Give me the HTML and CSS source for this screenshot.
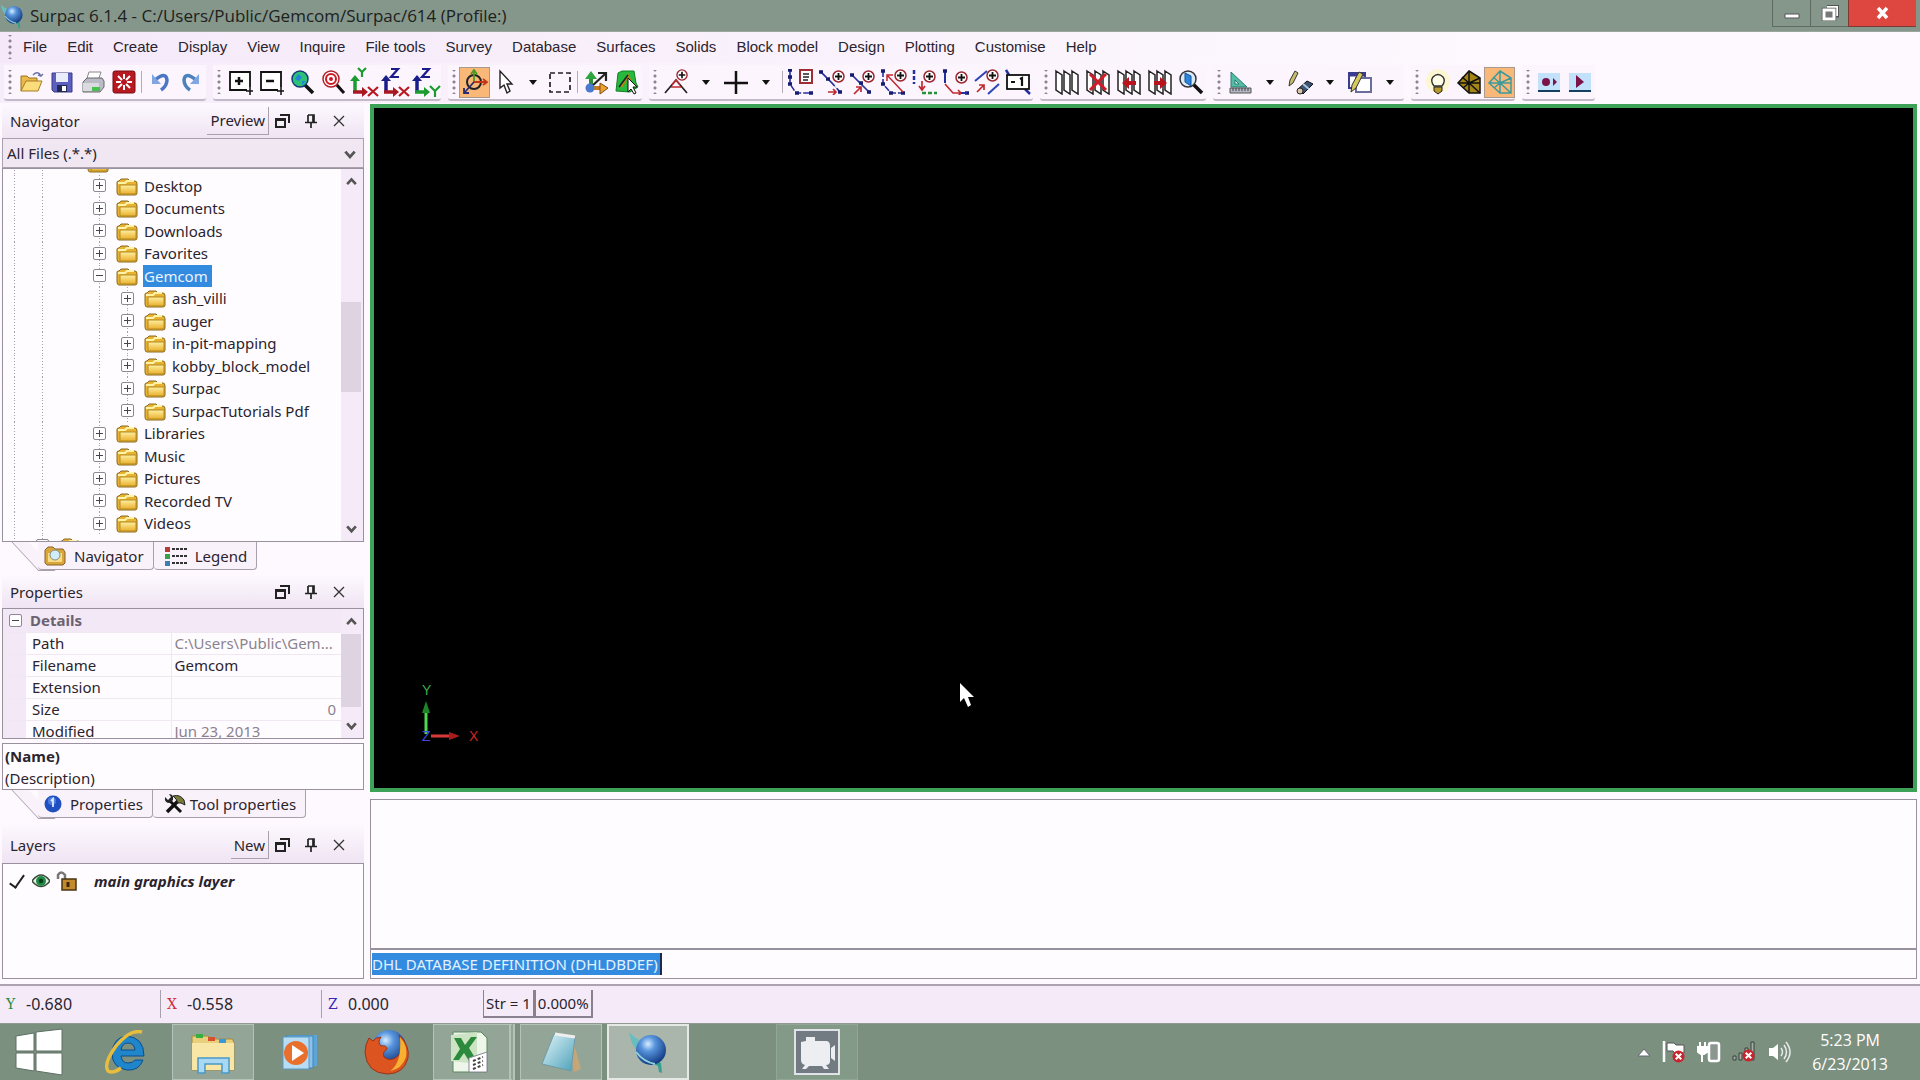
FILE: index.html
```html
<!DOCTYPE html>
<html lang="en">
<head>
    <title>Surpac 6.1.4</title>
    <meta charset="UTF-8">
    <link rel="stylesheet" href="styles.css">
</head>
<body>
    <!-- Shared icons -->
    <svg class="defs" aria-hidden="true">
        <defs>
            <radialGradient id="ball" cx="40%" cy="30%" r="70%"><stop offset="0" stop-color="#d5ecff"/><stop offset=".35" stop-color="#5794dc"/><stop offset="1" stop-color="#123a82"/></radialGradient>
            <linearGradient id="gold" x1="0" y1="0" x2="0" y2="1"><stop offset="0" stop-color="#fff0a0"/><stop offset="1" stop-color="#e9b02c"/></linearGradient>
            <linearGradient id="note" x1="0" y1="0" x2="1" y2="1"><stop offset="0" stop-color="#e4f6fa"/><stop offset="1" stop-color="#4aa0b8"/></linearGradient>
            <symbol id="folder" viewBox="0 0 22 18">
                <path d="M1 4 Q1 3 3 3 L5 1 H12 L14 3 H19 Q21 3 21 6 V15 Q21 17 19 17 H3 Q1 17 1 14 Z" fill="#e8b230" stroke="#8a6a20"/>
                <path d="M2 5 H9 L11 3 H18" stroke="#fff3a8" stroke-width="2" fill="none"/>
                <path d="M4 7 H20 V15 Q20 16 18 16 H4 Z" fill="url(#gold)" stroke="#b58a26"/>
            </symbol>
            <symbol id="float" viewBox="0 0 16 16"><path d="M1 6 H10 V14 H1 Z M1 7 H10 M5 2 H14 V10" fill="none" stroke="#222" stroke-width="2"/></symbol>
            <symbol id="pin" viewBox="0 0 16 16"><path d="M5 2 H11 V9 M5 2 V9 M10 2 V9 M2 9.500 H14 M8 10 V15" fill="none" stroke="#222" stroke-width="1.700"/></symbol>
            <symbol id="close" viewBox="0 0 16 16"><path d="M3 3 L13 13 M13 3 L3 13" stroke="#333" stroke-width="1.300"/></symbol>
            <symbol id="up" viewBox="0 0 12 12"><path d="M2 8.500 L6 4 L10 8.500" fill="none" stroke="#555" stroke-width="2.400"/></symbol>
            <symbol id="down" viewBox="0 0 12 12"><path d="M2 4 L6 8.500 L10 4" fill="none" stroke="#555" stroke-width="2.400"/></symbol>
            <symbol id="tri" viewBox="0 0 10 10"><path d="M1 3 H9 L5 8 Z" fill="#111"/></symbol>
            <symbol id="plus" viewBox="0 0 13 13"><circle cx="6.500" cy="6.500" r="5.500" fill="#fff" stroke="#9c2730" stroke-width="1.500"/><path d="M6.500 3 V10 M3 6.500 H10" stroke="#111" stroke-width="1.800"/></symbol>
            <symbol id="badx" viewBox="0 0 14 14"><circle cx="7" cy="7" r="6.500" fill="#c9252f"/><path d="M4 4 L10 10 M10 4 L4 10" stroke="#fff" stroke-width="2.200"/></symbol>
            <symbol id="globe" viewBox="0 0 40 44"><path d="M3 4 Q5 26 30 36 L31 42 L34 43 L33 33 Q12 24 3 4 Z" fill="#35a08e"/><path d="M1 2 Q4 20 16 26 Q6 12 12 10 Q5 7 1 2" fill="#66bec0"/><circle cx="23" cy="20" r="15" fill="url(#ball)"/><path d="M8 22 Q16 32 27 34" stroke="#8fd2dd" stroke-width="2" fill="none"/></symbol>
            <symbol id="panes" viewBox="0 0 26 26"><path d="M2 2 L8 6 V25 L2 21 Z M10 2 L16 6 V25 L10 21 Z M18 2 L24 6 V25 L18 21 Z" fill="#fff" stroke="#222" stroke-width="1.500"/></symbol>
        </defs>
    </svg>

    <!-- Title bar -->
    <header class="titlebar">
        <svg class="title-icon" viewBox="0 0 40 44"><use href="#globe"/></svg>
        <h1>Surpac 6.1.4 - C:/Users/Public/Gemcom/Surpac/614 (Profile:)</h1>
        <div class="window-buttons">
            <button aria-label="Minimise"><svg width="16" height="16" viewBox="0 0 16 16"><path d="M1 9 H15 V13 H1 Z" fill="#fff" stroke="#555"/></svg></button>
            <button aria-label="Restore"><svg width="18" height="16" viewBox="0 0 18 16"><path d="M6 1 H17 V11 H14" fill="none" stroke="#555" stroke-width="3"/><path d="M6 2 H16 V11" fill="none" stroke="#fff" stroke-width="2"/><path d="M3 5 H13 V14 H3 Z" fill="none" stroke="#555" stroke-width="4.500"/><path d="M3 5 H13 V14 H3 Z" fill="#777" stroke="#fff" stroke-width="3"/></svg></button>
            <button class="close" aria-label="Close"><svg width="15" height="14" viewBox="0 0 15 14"><path d="M3 2 L12 12 M12 2 L3 12" stroke="#fff" stroke-width="3.500"/></svg></button>
        </div>
    </header>

    <!-- Menus -->
    <nav class="menubar">
        <span class="grip"></span>
        <button>File</button><button>Edit</button><button>Create</button><button>Display</button><button>View</button><button>Inquire</button><button>File tools</button><button>Survey</button><button>Database</button><button>Surfaces</button><button>Solids</button><button>Block model</button><button>Design</button><button>Plotting</button><button>Customise</button><button>Help</button>
    </nav>

    <!-- Toolbars -->
    <div class="toolbar">
        <div class="group">
            <span class="grip"></span>
            <button aria-label="Open"><svg viewBox="0 0 26 26"><path d="M3 22 V7 H9 L11 9 H19 V12" fill="#eab94a" stroke="#9a7420"/><path d="M3 22 L8 12 H24 L20 22 Z" fill="#fbdc7a" stroke="#a67c22"/><path d="M15 6 Q20 1 23 7 L25 5 M23 7 L20 6" fill="none" stroke="#6b74a8" stroke-width="1.500"/></svg></button>
            <button aria-label="Save"><svg viewBox="0 0 26 26"><path d="M3 4 H23 V23 H5 L3 21 Z" fill="#5a5fc0" stroke="#3a3d86"/><path d="M7 4 H19 V13 H7 Z" fill="#e8ecfb"/><path d="M8 16 H18 V23 H8 Z" fill="#222a50"/><path d="M13 17 H17 V22 H13 Z" fill="#fff"/></svg></button>
            <button aria-label="Print"><svg viewBox="0 0 26 26"><path d="M9 3 H21 L18 12 H6 Z" fill="#fff" stroke="#888"/><path d="M3 13 L7 9 H22 L24 12 V18 L20 23 H3 Z" fill="#b9bcc4" stroke="#666"/><path d="M3 14 H19 V22 H3 Z" fill="#d9dbe0"/><path d="M12 18 H20 V22 H12 Z" fill="#46c04f"/></svg></button>
            <button aria-label="Reset graphics"><svg viewBox="0 0 26 26"><rect x="2" y="2" width="22" height="22" rx="2" fill="#b81820" stroke="#7b0c12"/><path d="M13 5 V10 M13 16 V21 M5 13 H10 M16 13 H21 M7 7 L11 11 M15 15 L19 19 M19 7 L15 11 M11 15 L7 19" stroke="#fff" stroke-width="2"/></svg></button>
            <span class="sep"></span>
            <button aria-label="Undo"><svg viewBox="0 0 26 26"><path d="M8 11 Q19 2 20 11 Q20 17 14 21" fill="none" stroke="#4a76c4" stroke-width="3.500"/><path d="M5 5 V15 H14 Z" fill="#7fa6e2"/></svg></button>
            <button aria-label="Redo"><svg viewBox="0 0 26 26"><path d="M18 11 Q7 2 6 11 Q6 17 12 21" fill="none" stroke="#4a82bc" stroke-width="3.500"/><path d="M21 5 V15 H12 Z" fill="#7fa6e2"/></svg></button>
        </div>
        <div class="group">
            <span class="grip"></span>
            <button aria-label="Zoom in"><svg viewBox="0 0 26 26"><path d="M20 21 H3 V3 H23 V18" fill="#fff" stroke="#111" stroke-width="1.800"/><path d="M12 8 V16 M8 12 H16" stroke="#111" stroke-width="2.500"/><path d="M23 18 V26 M19 22 H26" stroke="#111" stroke-width="1.500"/></svg></button>
            <button aria-label="Zoom out"><svg viewBox="0 0 26 26"><path d="M20 21 H3 V3 H23 V18" fill="#fff" stroke="#111" stroke-width="1.800"/><path d="M8 12 H16" stroke="#111" stroke-width="2.500"/><path d="M23 18 V26 M19 22 H26" stroke="#111" stroke-width="1.500"/></svg></button>
            <button aria-label="Zoom all"><svg viewBox="0 0 26 26"><path d="M15 15 L24 24" stroke="#111" stroke-width="3.500"/><circle cx="11" cy="10" r="8" fill="#2cc276" stroke="#163a7a" stroke-width="1.500"/><path d="M9 5 L13 8 L10 12 L6 10 Z M13 12 H17 L13 16 Z" fill="#2484dc"/></svg></button>
            <button aria-label="Zoom to data"><svg viewBox="0 0 26 26"><path d="M16 15 L24 24" stroke="#111" stroke-width="3"/><circle cx="11" cy="10" r="8" fill="#fff" stroke="#b02028" stroke-width="1.500"/><circle cx="11" cy="10" r="5" fill="#fff" stroke="#d01824" stroke-width="2"/><circle cx="11" cy="10" r="2" fill="#d01824"/></svg></button>
            <button class="axes" aria-label="XY view"><svg viewBox="0 0 30 30"><path d="M6 25 V13" stroke="#1c9c30" stroke-width="3.500"/><path d="M1 14 L6 8 L11 14 Z" fill="#1c9c30"/><path d="M4 25 H15" stroke="#a81820" stroke-width="3.500"/><path d="M13 20 L19 25 L13 30 Z" fill="#a81820"/><path d="M9 1 L13 5 L17 1 M13 5 V10" stroke="#1c9c30" stroke-width="2.200" fill="none"/><path d="M19 20 L29 29 M29 20 L19 29" stroke="#b81820" stroke-width="2.200"/></svg></button>
            <button class="axes" aria-label="XZ view"><svg viewBox="0 0 30 30"><path d="M6 25 V13" stroke="#1a1c8c" stroke-width="3.500"/><path d="M1 14 L6 8 L11 14 Z" fill="#1a1c8c"/><path d="M4 25 H15" stroke="#a81820" stroke-width="3.500"/><path d="M13 20 L19 25 L13 30 Z" fill="#a81820"/><path d="M11 2 H18 L11 10 H19" stroke="#1a1c8c" stroke-width="2.200" fill="none"/><path d="M19 20 L29 29 M29 20 L19 29" stroke="#b81820" stroke-width="2.200"/></svg></button>
            <button class="axes" aria-label="YZ view"><svg viewBox="0 0 30 30"><path d="M6 25 V13" stroke="#1a1c8c" stroke-width="3.500"/><path d="M1 14 L6 8 L11 14 Z" fill="#1a1c8c"/><path d="M4 25 H15" stroke="#1c9c30" stroke-width="3.500"/><path d="M13 20 L19 25 L13 30 Z" fill="#1c9c30"/><path d="M11 2 H18 L11 10 H19" stroke="#1a1c8c" stroke-width="2.200" fill="none"/><path d="M19 19 L24 24 L29 19 M24 24 V30" stroke="#1c9c30" stroke-width="2.200" fill="none"/></svg></button>
        </div>
        <div class="group">
            <span class="grip"></span>
            <button class="on" aria-label="Orbit"><svg viewBox="0 0 26 26"><circle cx="12" cy="13" r="7" fill="none" stroke="#222" stroke-width="2"/><path d="M12 14 V2 M9 5 L12 1 L15 5" stroke="#4a9a20" stroke-width="1.800" fill="none"/><path d="M12 13 H24 M21 10 L25 13 L21 16" stroke="#c03818" stroke-width="1.800" fill="none"/><path d="M12 13 L2 24 M2 19 V24 H7" stroke="#2c2c70" stroke-width="1.800" fill="none"/></svg></button>
            <button aria-label="Select"><svg viewBox="0 0 26 26"><path d="M7 2 V19 L11 16 L14 24 L17 22 L14 15 H19 Z" fill="#fff" stroke="#222" stroke-width="1.400"/></svg></button>
            <button class="drop narrow" aria-label="Select options"><svg viewBox="0 0 10 10"><use href="#tri"/></svg></button>
            <button aria-label="Box select"><svg viewBox="0 0 26 26"><rect x="3" y="4" width="20" height="19" fill="none" stroke="#222" stroke-width="1.700" stroke-dasharray="5 3"/></svg></button>
            <span class="sep"></span>
            <button aria-label="Move data"><svg viewBox="0 0 26 26"><path d="M8 16 V7" stroke="#2c8c38" stroke-width="4"/><path d="M2 10 L8 2 L14 10 Z" fill="#2fa53e"/><path d="M8 18 L22 5 M15 4 H23 V12" stroke="#222" stroke-width="2.200" fill="none"/><path d="M10 19 H18" stroke="#c87a1c" stroke-width="4"/><path d="M17 14 L25 19 L17 25 Z" fill="#eea030" stroke="#7a4c10"/><circle cx="7" cy="19" r="4.500" fill="#4a7ad0"/></svg></button>
            <button aria-label="Edit surface"><svg viewBox="0 0 26 26"><path d="M4 4 L8 2 H20 L22 14 L24 18 L16 23 L2 22 Z" fill="#27b83c" stroke="#128025"/><path d="M7 18 L14 7 L19 18" stroke="#b8860b" stroke-width="2.500" fill="none"/><path d="M5 18 L14 6" stroke="#123" stroke-width="1.500"/><path d="M14 9 V23 L17 20 L20 25 L22 24 L19 18 H23 Z" fill="#fff" stroke="#111"/></svg></button>
        </div>
        <div class="group">
            <span class="grip"></span>
            <button aria-label="New segment"><svg viewBox="0 0 26 26"><path d="M2 24 L13 11 L24 24" fill="none" stroke="#222" stroke-width="1.700"/><path d="M8 18 H18 M9 16 L13 11 L17 16" fill="none" stroke="#c02830" stroke-width="1.500"/><use href="#plus" x="13" y="0" width="12" height="12"/></svg></button>
            <button class="drop" aria-label="Segment options"><svg viewBox="0 0 10 10"><use href="#tri"/></svg></button>
            <button aria-label="New point"><svg viewBox="0 0 26 26"><path d="M13 2 V25 M1 14 H25" stroke="#111" stroke-width="2.500"/></svg></button>
            <button class="drop" aria-label="Point options"><svg viewBox="0 0 10 10"><use href="#tri"/></svg></button>
            <span class="sep"></span>
            <button aria-label="Segment properties"><svg viewBox="0 0 26 26"><path d="M2 1 V15 L8 24 H25" fill="none" stroke="#2430a0" stroke-width="1.600" stroke-dasharray="6 2"/><path d="M0 1 H4 M0 8 H4 M0 15 H4 M7 24 H11 M21 24 H25" stroke="#161c70" stroke-width="3.500"/><rect x="12" y="1" width="12" height="13" fill="#fff" stroke="#a02c34" stroke-width="2"/><path d="M15 5 H21 M15 8 H21 M15 11 H20" stroke="#222" stroke-width="1.300"/></svg></button>
            <button aria-label="Insert point"><svg viewBox="0 0 26 26"><path d="M1 2 L13 14 L21 23" stroke="#2430a0" stroke-width="1.700" stroke-dasharray="9 3"/><path d="M0 3 H4 M7 10 H11 M19 23 H23" stroke="#161c70" stroke-width="3.500"/><path d="M9 23 H17 M14 20 L17 23 L14 26" stroke="#c02830" stroke-width="1.700" fill="none"/><use href="#plus" x="13" y="1" width="13" height="13"/></svg></button>
            <button aria-label="Move point"><svg viewBox="0 0 26 26"><path d="M2 6 L20 24" stroke="#2430a0" stroke-width="1.700"/><path d="M0 6 H4 M9 14 H13 M17 23 H21" stroke="#161c70" stroke-width="3.500"/><path d="M4 25 L11 18 M6 18 H11 V23" stroke="#c02830" stroke-width="1.700" fill="none"/><use href="#plus" x="12" y="1" width="13" height="13"/></svg></button>
            <button aria-label="Close segment"><svg viewBox="0 0 26 26"><path d="M2 2 V15 L10 24 H23" fill="none" stroke="#2430a0" stroke-width="1.600" stroke-dasharray="6 2"/><path d="M0 2 H4 M0 15 H4 M8 24 H12 M20 24 H24" stroke="#161c70" stroke-width="3.500"/><path d="M22 23 L6 6 M6 12 V6 H12" stroke="#c02830" stroke-width="1.500" fill="none"/><use href="#plus" x="13" y="0" width="13" height="13"/></svg></button>
            <button aria-label="Copy segment"><svg viewBox="0 0 26 26"><path d="M2 1 V15" stroke="#2430a0" stroke-width="2.500" stroke-dasharray="4 2"/><path d="M10 12 V20 M7 17 L10 21 L13 17" stroke="#c02830" stroke-width="1.700" fill="none"/><path d="M10 24 H25" stroke="#26933a" stroke-width="2.500" stroke-dasharray="4 2"/><use href="#plus" x="11" y="1" width="13" height="13"/></svg></button>
            <button aria-label="Extend segment"><svg viewBox="0 0 26 26"><path d="M2 1 V14" stroke="#2430a0" stroke-width="2"/><path d="M0 2 H4 M22 24 H26" stroke="#161c70" stroke-width="3.500"/><path d="M2 15 L10 24 H18 M15 21 L18 24 L15 27" stroke="#c02830" stroke-width="1.600" fill="none"/><path d="M18 24 H24" stroke="#2430a0" stroke-width="2"/><use href="#plus" x="12" y="2" width="13" height="13"/></svg></button>
            <button aria-label="Break segment"><svg viewBox="0 0 26 26"><path d="M1 12 L13 2 M14 25 L25 15" stroke="#2c46b8" stroke-width="2"/><path d="M3 23 L10 16 M5 16 H10 V21" stroke="#c02830" stroke-width="1.700" fill="none"/><use href="#plus" x="12" y="0" width="13" height="13"/></svg></button>
            <button aria-label="Renumber"><svg viewBox="0 0 26 26"><path d="M1 1 L4 6 M20 20 L25 25" stroke="#2430a0" stroke-width="2.500"/><rect x="2" y="6" width="22" height="14" fill="#fff" stroke="#111" stroke-width="1.800"/><path d="M6 13 H10 M15 10 L17 9 V17" stroke="#111" stroke-width="2.200" fill="none"/></svg></button>
        </div>
        <div class="group">
            <span class="grip"></span>
            <button aria-label="Sections"><svg viewBox="0 0 26 26"><use href="#panes"/></svg></button>
            <button aria-label="Clear sections"><svg viewBox="0 0 26 26"><use href="#panes"/><path d="M5 5 L21 21 M21 5 L5 21" stroke="#d01c28" stroke-width="3"/></svg></button>
            <button aria-label="Previous section"><svg viewBox="0 0 26 26"><use href="#panes"/><path d="M6 14 L13 8 V12 H20 V16 H13 V20 Z" fill="#b8141e"/></svg></button>
            <button aria-label="Next section"><svg viewBox="0 0 26 26"><use href="#panes"/><path d="M20 14 L13 8 V12 H7 V16 H13 V20 Z" fill="#b8141e"/></svg></button>
            <button aria-label="View section"><svg viewBox="0 0 26 26"><path d="M15 15 L24 24" stroke="#111" stroke-width="3.500"/><circle cx="10" cy="10" r="8" fill="#dceaf8" stroke="#333" stroke-width="1.500"/><path d="M7 4 L13 7 V17 L7 13 Z" fill="#2a86dc" stroke="#174f94"/></svg></button>
        </div>
        <div class="group">
            <span class="grip"></span>
            <button aria-label="Measure"><svg viewBox="0 0 26 26"><path d="M4 3 V18 H20 Z M8 11 V15 H12 Z" fill="#54bca4" stroke="#2c7a70" fill-rule="evenodd"/><path d="M3 19 H24 V24 H3 Z" fill="#b4b8c4" stroke="#555"/><path d="M6 19 V22 M9 19 V22 M12 19 V22 M15 19 V22 M18 19 V22 M21 19 V22" stroke="#444"/></svg></button>
            <button class="drop" aria-label="Measure options"><svg viewBox="0 0 10 10"><use href="#tri"/></svg></button>
            <button aria-label="Edit"><svg viewBox="0 0 26 26"><path d="M8 2 L11 4 L6 14 L2 17 L3 11 Z" fill="#c9bc6a" stroke="#333"/><path d="M11 20 L20 12 L26 15 L16 25 Z" fill="#3b5474" stroke="#111"/><path d="M16 15 L22 20" stroke="#b0c4dc" stroke-width="2"/><ellipse cx="13" cy="22" rx="3" ry="3" fill="#d8c4a8" stroke="#222"/></svg></button>
            <button class="drop" aria-label="Edit options"><svg viewBox="0 0 10 10"><use href="#tri"/></svg></button>
            <button aria-label="Layout"><svg viewBox="0 0 26 26"><rect x="2" y="4" width="16" height="15" fill="#fff" stroke="#3a3c90" stroke-width="2"/><path d="M2 6 H18" stroke="#3a3c90" stroke-width="3"/><rect x="9" y="9" width="15" height="14" fill="#fff" stroke="#6a6c9a" stroke-width="2"/><path d="M12 3 L16 5 L9 19 L4 23 L5 16 Z" fill="#d8c860" stroke="#333"/></svg></button>
            <button class="drop" aria-label="Layout options"><svg viewBox="0 0 10 10"><use href="#tri"/></svg></button>
        </div>
        <div class="group">
            <span class="grip"></span>
            <button aria-label="Light"><svg viewBox="0 0 26 26"><circle cx="13" cy="12" r="12" fill="#fdf6b8" opacity=".6"/><path d="M9 17 Q5 12 8 8 Q13 3 18 8 Q21 12 17 17 Z" fill="#fffce8" stroke="#333" stroke-width="1.400"/><path d="M9 18 H17 V22 L13 25 L9 22 Z" fill="#b8992c" stroke="#222"/></svg></button>
            <button aria-label="Solid faces"><svg viewBox="0 0 26 26"><path d="M13 2 L24 9 V24 L13 24 L2 14 Z" fill="#a58418" stroke="#111" stroke-width="1.500"/><path d="M13 2 V24 M2 14 H24 M13 14 L24 9 M13 14 L24 24 M13 14 L6 8 M13 14 L7 19" stroke="#111" stroke-width="1.500"/></svg></button>
            <button class="on" aria-label="Wireframe"><svg viewBox="0 0 26 26"><path d="M13 2 L24 9 V24 L13 24 L2 14 Z M13 2 V24 M2 14 H24 M13 14 L24 9 M13 14 L24 24 M13 14 L6 8 M13 14 L7 19" fill="none" stroke="#3d9a9c" stroke-width="1.500"/></svg></button>
        </div>
        <div class="group">
            <span class="grip"></span>
            <button aria-label="Record macro"><svg viewBox="0 0 26 26"><rect x="2" y="4" width="22" height="17" fill="#c2e2fb"/><path d="M2 22 H24" stroke="#12405e" stroke-width="2"/><circle cx="10" cy="13" r="4" fill="#7a1448"/><path d="M17 9 L21 13 L17 17 Z" fill="#7a1448"/></svg></button>
            <button aria-label="Play macro"><svg viewBox="0 0 26 26"><rect x="2" y="4" width="22" height="17" fill="#c2e2fb"/><path d="M2 22 H24" stroke="#12405e" stroke-width="2"/><path d="M9 6 L17 13 L9 19 Z" fill="#7a1448"/></svg></button>
        </div>
    </div>

    <main class="workspace">
        <aside class="sidebar">
            <!-- Navigator -->
            <section class="panel navigator">
                <div class="panel-head">
                    <h2>Navigator</h2>
                    <button class="text-btn">Preview</button>
                    <button class="icon-btn" aria-label="Float"><svg><use href="#float"/></svg></button>
                    <button class="icon-btn" aria-label="Pin"><svg><use href="#pin"/></svg></button>
                    <button class="icon-btn" aria-label="Close"><svg><use href="#close"/></svg></button>
                </div>
                <div class="filter">
                    <select aria-label="File filter"><option>All Files (.*.*)</option></select>
                    <svg><use href="#down"/></svg>
                </div>
                <div class="box tree-box">
                    <ul class="tree">
                        <li class="l2"><svg><use href="#folder"/></svg></li>
                        <li class="l3"><button class="exp" aria-label="Expand"></button><svg><use href="#folder"/></svg><span>Desktop</span></li>
                        <li class="l3"><button class="exp" aria-label="Expand"></button><svg><use href="#folder"/></svg><span>Documents</span></li>
                        <li class="l3"><button class="exp" aria-label="Expand"></button><svg><use href="#folder"/></svg><span>Downloads</span></li>
                        <li class="l3"><button class="exp" aria-label="Expand"></button><svg><use href="#folder"/></svg><span>Favorites</span></li>
                        <li class="l3"><button class="exp minus" aria-label="Collapse"></button><svg><use href="#folder"/></svg><span class="selected">Gemcom</span></li>
                        <li class="l4"><button class="exp" aria-label="Expand"></button><svg><use href="#folder"/></svg><span>ash_villi</span></li>
                        <li class="l4"><button class="exp" aria-label="Expand"></button><svg><use href="#folder"/></svg><span>auger</span></li>
                        <li class="l4"><button class="exp" aria-label="Expand"></button><svg><use href="#folder"/></svg><span>in-pit-mapping</span></li>
                        <li class="l4"><button class="exp" aria-label="Expand"></button><svg><use href="#folder"/></svg><span>kobby_block_model</span></li>
                        <li class="l4"><button class="exp" aria-label="Expand"></button><svg><use href="#folder"/></svg><span>Surpac</span></li>
                        <li class="l4"><button class="exp" aria-label="Expand"></button><svg><use href="#folder"/></svg><span>SurpacTutorials Pdf</span></li>
                        <li class="l3"><button class="exp" aria-label="Expand"></button><svg><use href="#folder"/></svg><span>Libraries</span></li>
                        <li class="l3"><button class="exp" aria-label="Expand"></button><svg><use href="#folder"/></svg><span>Music</span></li>
                        <li class="l3"><button class="exp" aria-label="Expand"></button><svg><use href="#folder"/></svg><span>Pictures</span></li>
                        <li class="l3"><button class="exp" aria-label="Expand"></button><svg><use href="#folder"/></svg><span>Recorded TV</span></li>
                        <li class="l3"><button class="exp" aria-label="Expand"></button><svg><use href="#folder"/></svg><span>Videos</span></li>
                        <li class="l1"><button class="exp" aria-label="Expand"></button><svg><use href="#folder"/></svg><span>Windows</span></li>
                    </ul>
                    <div class="scrollbar tree-scroll">
                        <button aria-label="Scroll up"><svg><use href="#up"/></svg></button>
                        <span class="before"></span><span class="thumb"></span><span class="after"></span>
                        <button aria-label="Scroll down"><svg><use href="#down"/></svg></button>
                    </div>
                </div>
                <div class="tabs">
                    <button class="tab first"><svg width="22" height="20" viewBox="0 0 22 20"><path d="M1 4 L4 1 H9 L11 3 H19 L21 6 V17 L19 19 H3 L1 17 Z" fill="#d9a63a" stroke="#86632a"/><path d="M4 7 H18 V16 H4 Z" fill="#f8dc88"/><circle cx="11" cy="9" r="5" fill="#cdeefa" stroke="#8a8a7a"/></svg>Navigator</button>
                    <button class="tab"><svg width="22" height="20" viewBox="0 0 22 20"><path d="M0 1 H5 V6 H0 Z" fill="#b83a34"/><path d="M0 8 H5 V13 H0 Z" fill="#3aa048"/><path d="M0 15 H5 V20 H0 Z" fill="#3a80b4"/><path d="M7 3 H22 M7 10 H22 M7 17 H22" stroke="#333" stroke-width="2" stroke-dasharray="3 1"/></svg>Legend</button>
                </div>
            </section>

            <!-- Properties -->
            <section class="panel">
                <div class="panel-head short">
                    <h2>Properties</h2>
                    <button class="icon-btn" aria-label="Float"><svg><use href="#float"/></svg></button>
                    <button class="icon-btn" aria-label="Pin"><svg><use href="#pin"/></svg></button>
                    <button class="icon-btn" aria-label="Close"><svg><use href="#close"/></svg></button>
                </div>
                <div class="box props-box">
                    <table class="props">
                        <thead><tr><th class="margin"><button class="exp minus" aria-label="Collapse"></button></th><th colspan="2">Details</th></tr></thead>
                        <tbody>
                            <tr><td class="margin"></td><th>Path</th><td class="grey">C:\Users\Public\Gem...</td></tr>
                            <tr><td class="margin"></td><th>Filename</th><td>Gemcom</td></tr>
                            <tr><td class="margin"></td><th>Extension</th><td></td></tr>
                            <tr><td class="margin"></td><th>Size</th><td class="grey num">0</td></tr>
                            <tr><td class="margin"></td><th>Modified</th><td class="grey">Jun 23, 2013</td></tr>
                        </tbody>
                    </table>
                    <div class="scrollbar props-scroll">
                        <button aria-label="Scroll up"><svg><use href="#up"/></svg></button>
                        <span class="thumb"></span><span class="after"></span>
                        <button aria-label="Scroll down"><svg><use href="#down"/></svg></button>
                    </div>
                </div>
                <div class="box describe"><b>(Name)</b><span>(Description)</span></div>
                <div class="tabs">
                    <button class="tab first"><svg width="18" height="18" viewBox="0 0 18 18"><circle cx="9" cy="9" r="8.500" fill="#1f4fc0"/><circle cx="8" cy="6" r="4" fill="#6d9cf0" opacity=".6"/><path d="M7 6 L9 4 V12" stroke="#dfeaff" stroke-width="1.800" fill="none"/></svg>Properties</button>
                    <button class="tab tools"><svg width="22" height="20" viewBox="0 0 22 20"><path d="M6 7 L17 18" stroke="#111" stroke-width="3"/><path d="M1 3 L4 6 L7 3 L5 0 Q10 0 9 6 L6 9 Q0 9 1 3" fill="#222"/><path d="M3 18 L14 7" stroke="#111" stroke-width="3.500"/><path d="M9 2 Q16 0 20 6 L21 11 L17 9 L14 9 L12 5 Z" fill="#777a3a" stroke="#222"/></svg>Tool properties</button>
                </div>
            </section>

            <!-- Layers -->
            <section class="panel">
                <div class="panel-head tall">
                    <h2>Layers</h2>
                    <button class="text-btn">New</button>
                    <button class="icon-btn" aria-label="Float"><svg><use href="#float"/></svg></button>
                    <button class="icon-btn" aria-label="Pin"><svg><use href="#pin"/></svg></button>
                    <button class="icon-btn" aria-label="Close"><svg><use href="#close"/></svg></button>
                </div>
                <div class="box layers">
                    <div class="layer">
                        <input type="checkbox" id="layer1" checked>
                        <svg width="18" height="14" viewBox="0 0 18 14"><path d="M0 7 Q9 -5 18 7 Q9 18 0 7" fill="#e8f2e8" stroke="#3a4a3a" stroke-width="1.500"/><circle cx="9" cy="7" r="5" fill="#1d8a44"/><circle cx="9" cy="7" r="2.200" fill="#0c3a1c"/></svg>
                        <svg width="22" height="20" viewBox="0 0 22 20"><path d="M2 8 V4 Q5 -1 9 4 V9" fill="none" stroke="#777" stroke-width="2.500"/><rect x="6" y="8" width="14" height="11" fill="#c28a2c" stroke="#4a3410" stroke-width="1.500"/><path d="M12 11 V16" stroke="#3a280c" stroke-width="3"/></svg>
                        <label for="layer1">main graphics layer</label>
                    </div>
                </div>
            </section>
        </aside>

        <section class="stage">
            <!-- Graphics viewport -->
            <div class="viewport">
                <svg class="triad" width="62" height="62" viewBox="0 0 62 62">
                    <text x="7" y="12" fill="#3fae4c">Y</text>
                    <path d="M11 51 V28" stroke="#50d850" stroke-width="3"/><path d="M7 30 L11 18 L15 30 Z" fill="#1d8428"/>
                    <path d="M16 53 H36" stroke="#d83a3a" stroke-width="3"/><path d="M34 49 L45 53 L34 57 Z" fill="#a81c1c"/>
                    <text x="7" y="58" fill="#4248e0">Z</text>
                    <text x="54" y="58" fill="#d02424">X</text>
                </svg>
                <svg class="cursor" width="16" height="26" viewBox="0 0 16 26"><path d="M1 1 V20 L5 16 L9 25 L12 23 L9 15 H15 Z" fill="#fff"/></svg>
            </div>
            <div class="messages"></div>
            <div class="command"><input type="text" aria-label="Command" value="DHL DATABASE DEFINITION (DHLDBDEF)"></div>
        </section>
    </main>

    <!-- Coordinates -->
    <footer class="status">
        <div class="coord"><span class="axis y">Y</span>-0.680</div>
        <div class="coord"><span class="axis x">X</span>-0.558</div>
        <div class="coord"><span class="axis z">Z</span>0.000</div>
        <button>Str = 1</button><button>0.000%</button>
    </footer>

    <!-- Windows taskbar -->
    <div class="taskbar">
        <button class="start" aria-label="Start"><svg width="48" height="48" viewBox="0 0 48 48"><path d="M1 8 L19 5 V23 H1 Z M21 4 L47 1 V23 H21 Z M1 25 H19 V43 L1 40 Z M21 25 H47 V47 L21 43 Z" fill="#fff" stroke="#5d6f62"/></svg></button>
        <button aria-label="Internet Explorer"><svg width="44" height="44" viewBox="0 0 44 44"><path d="M22 6 Q40 7 40 26 H17 Q18 33 24 33 Q29 33 31 30 H39 Q35 41 23 40 Q8 38 8 23 Q9 8 22 6 M17 20 H31 Q30 13 24 13 Q18 13 17 20" fill="#1f86cc" stroke="#0c4c8c" fill-rule="evenodd"/><path d="M38 2 Q26 -1 12 16 Q-1 34 4 41 Q9 44 17 38" fill="none" stroke="#e8bc3c" stroke-width="3.500"/></svg></button>
        <button class="open" aria-label="File Explorer"><svg width="46" height="44" viewBox="0 0 46 44"><path d="M2 6 H18 L21 9 H42 L44 12 V40 H2 Z" fill="#e8cf7c" stroke="#a08a40"/><path d="M6 4 H13 V8 H6 Z" fill="#35b040"/><path d="M18 7 H25 V11 H18 Z" fill="#d85030"/><path d="M29 9 H36 V13 H29 Z" fill="#3898d8"/><path d="M2 13 H44 V40 H2 Z" fill="#f7e6a6"/><path d="M8 43 V28 H39 V43 H32 V34 H15 V43 Z" fill="#a8d8f2" stroke="#4a98c8" stroke-width="1.500"/></svg></button>
        <button aria-label="Media Player"><svg width="38" height="38" viewBox="0 0 38 38"><path d="M8 2 H36 V33 H8 Z" fill="#5da4d8"/><path d="M5 3 H32 V35 H5 Z" fill="#8cc2e8" stroke="#3f84b8"/><path d="M2 4 H28 V36 H2 Z" fill="#b8dcf4" stroke="#5898c4"/><circle cx="15" cy="20" r="12" fill="#e8702c"/><path d="M11 12 L23 20 L11 28 Z" fill="#fff"/></svg></button>
        <button aria-label="Firefox"><svg width="46" height="46" viewBox="0 0 46 46"><circle cx="25" cy="18" r="17" fill="url(#ball)"/><path d="M5 9 L9 12 Q12 8 17 8 Q13 13 17 17 Q23 16 23 20 Q18 23 20 28 Q27 34 35 26 Q40 17 35 6 Q46 16 44 29 Q40 45 23 45 Q3 44 1 24 Q1 15 5 9" fill="#dc5420" stroke="#98341a"/><path d="M36 8 Q44 17 42 28 Q38 40 26 42 Q38 34 36 8" fill="#f7b030"/></svg></button>
        <button class="open stacked" aria-label="Excel"><svg width="40" height="44" viewBox="0 0 40 44"><path d="M4 2 H32 L38 8 V42 H4 Z" fill="#eef6ea" stroke="#58885a"/><path d="M2 5 L28 2 V34 L2 31 Z" fill="#cde4c4"/><path d="M5 8 L12 8 L16 15 L22 7 H28 L20 18 L28 31 H20 L15 23 L10 30 H4 L11 19 Z" fill="#2c8a3c"/><path d="M20 28 L38 22 V42 H20 Z" fill="#fff" stroke="#889"/><path d="M24 31 L34 27 M24 35 L34 31 M24 39 L34 35" stroke="#444" stroke-width="2" stroke-dasharray="3 2"/></svg></button>
        <button class="open" aria-label="Notepad"><svg width="42" height="42" viewBox="0 0 42 42"><path d="M32 6 L41 38 L34 41 L28 10 Z" fill="#c4a678"/><path d="M14 3 L35 6 L31 40 L2 33 Z" fill="url(#note)" stroke="#6f9aa8"/><path d="M15 3 L35 6" stroke="#eee" stroke-width="3"/></svg></button>
        <button class="open active" aria-label="Surpac"><svg width="40" height="44"><use href="#globe"/></svg></button>
        <button class="open camera" aria-label="Recorder"><svg width="46" height="46" viewBox="0 0 46 46"><rect x="1" y="1" width="44" height="44" fill="#727b82" stroke="#dfe3e6" stroke-width="2"/><path d="M7 13 L12 12 V8 H21 V12 H32 Q36 12 36 17 V32 Q36 36 32 36 L35 40 H30 L28 37 H15 L12 40 H8 L11 36 Q7 35 7 31 Z M37 19 L41 16 V32 L37 29 Z" fill="#eceef2"/></svg></button>
        <div class="tray">
            <svg width="14" height="10" viewBox="0 0 14 10"><path d="M1 9 L7 2 L13 9 Z" fill="#fff" stroke="#667"/></svg>
            <svg width="24" height="24" viewBox="0 0 24 24"><path d="M2 1 V22" stroke="#fff" stroke-width="2.500"/><path d="M5 3 H12 L14 5 H22 V13 H13 L11 11 H5 Z" fill="#fff" stroke="#555"/><use href="#badx" x="10" y="10" width="13" height="13"/></svg>
            <svg width="24" height="24" viewBox="0 0 24 24"><path d="M3 2 V7 M8 2 V7 M1 7 H10 V12 L7 14 H4 L1 12 Z M5 13 V22" fill="#fff" stroke="#fff" stroke-width="2"/><rect x="12" y="3" width="10" height="18" rx="2" fill="#8b968f" stroke="#fff" stroke-width="2.500"/></svg>
            <svg width="24" height="24" viewBox="0 0 24 24"><path d="M1 16 H4 V20 H1 Z M7 13 H10 V20 H7 Z M13 8 H16 V20 H13 Z M19 2 H22 V20 H19 Z" fill="#a3ada6" stroke="#39433c"/><use href="#badx" x="10" y="9" width="13" height="13"/></svg>
            <svg width="24" height="24" viewBox="0 0 24 24"><path d="M2 8 H6 L11 4 V20 L6 16 H2 Z" fill="#fff"/><path d="M14 8 Q17 12 14 16 M17 5 Q22 12 17 19 M19 2 Q27 12 19 22" fill="none" stroke="#e6ebe7" stroke-width="1.500"/></svg>
        </div>
        <div class="clock"><span>5:23 PM</span><span>6/23/2013</span></div>
    </div>
</body>
</html>
```
FILE: styles.css
```css
* {
    box-sizing: border-box;
}
body {
    margin: 0;
    height: 100vh;
    display: flex;
    flex-direction: column;
    overflow: hidden;
    background-color: #fdf9fe;
    color: #2a242e;
    font-family: "Noto Sans", "Open Sans", sans-serif;
    font-size: 15px;
}
button, input, select {
    font: inherit;
    color: inherit;
    background: none;
    border: none;
    border-radius: 0;
    padding: 0;
    margin: 0;
}
h1, h2 {
    margin: 0;
    font-weight: normal;
}
svg {
    display: block;
    flex: none;
}
.defs {
    position: absolute;
    width: 0;
    height: 0;
}

/* title bar */
.titlebar {
    display: flex;
    align-items: center;
    height: 32px;
    padding-right: 4px;
    background-color: #85968a;
    border-bottom: 1px solid #9aa69d;
}
.title-icon {
    width: 24px;
    height: 26px;
    margin-right: 6px;
}
.titlebar h1 {
    flex: 1;
    font-family: "Open Sans", sans-serif;
    font-size: 17px;
    color: #1c211d;
}
.window-buttons {
    display: flex;
    align-self: flex-start;
}
.window-buttons button {
    display: grid;
    place-items: center;
    width: 38px;
    height: 27px;
    border: 1px solid #5d6b61;
    border-width: 0 0 1px 1px;
}
.window-buttons .close {
    width: 68px;
    background-color: #dd4740;
    border-color: #7c3a34;
}

/* menus */
.menubar {
    display: flex;
    align-items: center;
    height: 31px;
    padding: 0 0 2px 4px;
    background: linear-gradient(90deg, #f5e9f9, #fdf9fe 80%);
    font-family: "Liberation Sans", sans-serif;
}
.menubar button {
    padding: 0 10px;
    white-space: nowrap;
}
.menubar .grip {
    margin-right: -2px;
}
.grip {
    width: 11px;
    height: 24px;
    background: radial-gradient(circle, #8d8492 1px, transparent 2px) center / 4px 6px repeat-y;
}

/* toolbars */
.toolbar {
    display: flex;
    gap: 7px;
    height: 40px;
    padding: 2px 0 2px 4px;
    background: linear-gradient(90deg, #f7ecfa, #fdf9fe 80%);
}
.group {
    display: flex;
    align-items: center;
    background-color: #fcf5fd;
    border-bottom: 2px solid #c3bac8;
    border-radius: 0 0 3px 3px;
}
.group button {
    display: grid;
    place-items: center;
    width: 31px;
    height: 31px;
}
.group button svg {
    width: 26px;
    height: 26px;
}
.group .axes svg {
    width: 30px;
    height: 30px;
}
.group .on {
    background-color: #fab878;
    border: 1px solid #a9998f;
}
.group .drop {
    width: 29px;
}
.group .narrow {
    width: 23px;
}
.group .drop svg {
    width: 10px;
    height: 10px;
}
.sep {
    width: 5px;
    height: 22px;
    background: linear-gradient(#b5adba, #b5adba) center / 1px 100% no-repeat;
}

/* workspace */
.workspace {
    flex: 1;
    min-height: 0;
    display: grid;
    grid-template-columns: 370px 1fr;
    padding: 0 3px 5px 0;
}
.sidebar {
    display: flex;
    flex-direction: column;
    min-height: 0;
    padding: 0 6px 0 2px;
}
.navigator {
    flex: 1;
    min-height: 0;
    display: flex;
    flex-direction: column;
}
.panel-head {
    display: flex;
    align-items: center;
    height: 35px;
    padding: 0 11px 0 8px;
    background: linear-gradient(#fdf9fe, #efe4f3);
}
.panel-head.short {
    height: 33px;
}
.panel-head.tall {
    height: 40px;
    padding-top: 4px;
}
.panel-head h2 {
    flex: 1;
    font-size: 15px;
}
.text-btn {
    height: 28px;
    padding: 0 3px;
    border: 1px solid #aaa0ae;
    border-width: 0 1px 1px 0;
}
.icon-btn {
    display: grid;
    place-items: center;
    width: 28px;
    height: 24px;
}
.icon-btn svg {
    width: 16px;
    height: 16px;
}
.box {
    background-color: #fffcff;
    border: 1px solid #9a919e;
}
.filter {
    position: relative;
}
.filter select {
    display: block;
    width: 100%;
    height: 30px;
    padding-left: 4px;
    appearance: none;
    background-color: #f0e7f3;
    border: 1px solid #aaa0ae;
}
.filter svg {
    position: absolute;
    right: 7px;
    top: 9px;
    width: 14px;
    height: 14px;
    pointer-events: none;
}

/* folder tree */
.tree-box {
    flex: 1;
    min-height: 0;
    display: flex;
    overflow: hidden;
}
.tree {
    --dots: repeating-linear-gradient(#a79fab 0 1px, transparent 1px 3px);
    flex: 1;
    display: grid;
    grid-auto-rows: 1fr;
    height: 405px;
    margin: -17px 0 0;
    padding: 0;
    list-style: none;
}
.tree li {
    display: flex;
    align-items: center;
    background-image: var(--dots), var(--dots), var(--dots), var(--dots);
    background-repeat: no-repeat;
    background-size: 1px 100%, 1px 100%, 0 0, 0 0;
    background-position: 11px 0, 39px 0, 96px 0, 124px 0;
    white-space: nowrap;
}
.tree .l1 {
    padding-left: 33px;
}
.tree .l2 {
    padding-left: 84px;
}
.tree .l3 {
    padding-left: 90px;
    background-size: 1px 100%, 1px 100%, 1px 100%, 0 0;
}
.tree .l4 {
    padding-left: 118px;
    background-size: 1px 100%, 1px 100%, 1px 100%, 1px 100%;
}
.tree svg {
    width: 22px;
    height: 18px;
    margin: 2px 5px 0 0;
}
.tree span {
    padding: 0 4px 0 1px;
    line-height: 22px;
}
.tree .selected {
    background-color: #338be0;
    color: #e9f4ff;
}
.tree .exp {
    margin-right: 10px;
}
.exp {
    flex: none;
    width: 13px;
    height: 13px;
    border: 1px solid #8f8794;
    border-radius: 2px;
    background: linear-gradient(#4a4450, #4a4450) center / 7px 1px no-repeat, linear-gradient(#4a4450, #4a4450) center / 1px 7px no-repeat, #fff;
}
.exp.minus {
    background: linear-gradient(#4a4450, #4a4450) center / 7px 1px no-repeat, #fff;
}

/* scrollbars */
.scrollbar {
    display: flex;
    flex-direction: column;
    width: 22px;
    padding-right: 2px;
    background-color: #f5ebf8;
}
.scrollbar button {
    display: grid;
    place-items: center;
    height: 25px;
}
.scrollbar svg {
    width: 13px;
    height: 13px;
}
.thumb {
    background-color: #ddd3e1;
}
.tree-scroll .before {
    flex: 108;
}
.tree-scroll .thumb {
    flex: 90;
}
.tree-scroll .after {
    flex: 124;
}
.props-scroll .thumb {
    flex: 73;
}
.props-scroll .after {
    flex: 6;
}

/* tabs under the panels */
.tabs {
    display: flex;
    height: 33px;
    padding: 0 0 5px 36px;
}
.tab {
    position: relative;
    display: flex;
    align-items: center;
    gap: 8px;
    height: 28px;
    padding: 0 9px 0 11px;
    background-color: #faf2fb;
    border: 1px solid #a9a0ad;
    border-width: 0 1px 1px 0;
    border-radius: 0 0 4px 4px;
}
.tab.first {
    padding-left: 6px;
}
.tab.tools {
    gap: 4px;
}
.tab.first::before {
    content: "";
    position: absolute;
    left: -13px;
    top: 0;
    width: 16px;
    height: 28px;
    background-color: #faf2fb;
    border: 1px solid #a9a0ad;
    border-width: 0 0 1px 1px;
    transform: skewX(43deg);
    z-index: -1;
}

/* properties */
.props-box {
    display: flex;
    height: 131px;
    overflow: hidden;
}
.props {
    flex: 1;
    align-self: flex-start;
    border-collapse: collapse;
    table-layout: fixed;
}
.props th, .props td {
    height: 22px;
    padding: 0 5px 0 6px;
    border-bottom: 1px solid #f0e7f3;
    text-align: left;
    font-weight: normal;
    line-height: 21px;
    white-space: nowrap;
}
.props tbody th {
    width: 145px;
}
.props tbody th + td {
    padding-left: 3px;
    border-left: 1px solid #f0e7f3;
}
.props .margin {
    width: 23px;
    padding: 0 0 0 6px;
    background-color: #f3e9f6;
}
.props thead th {
    height: 23px;
    padding-left: 4px;
    background-color: #f3e9f6;
    color: #6b6370;
    font-weight: bold;
}
.props .exp {
    display: block;
}
.props .grey {
    color: #8a838e;
}
.props .num {
    text-align: right;
}
.describe {
    display: flex;
    flex-direction: column;
    height: 47px;
    margin-top: 4px;
    padding: 1px 2px;
    line-height: 22px;
}

/* layers */
.layers {
    height: 116px;
    padding-top: 5px;
}
.layer {
    display: flex;
    align-items: center;
    height: 24px;
    padding-left: 5px;
}
.layer input {
    appearance: none;
    width: 18px;
    height: 18px;
    margin-right: 6px;
}
.layer input:checked::before {
    content: "";
    display: block;
    width: 6px;
    height: 14px;
    margin-left: 5px;
    border: solid #222;
    border-width: 0 2px 2px 0;
    transform: rotate(35deg);
}
.layer svg {
    margin-right: 6px;
}
.layer label {
    margin-left: 10px;
    font-weight: bold;
    font-style: italic;
}

/* graphics and messages */
.stage {
    display: flex;
    flex-direction: column;
    min-height: 0;
}
.viewport {
    position: relative;
    flex: 1;
    margin-top: 1px;
    background-color: #000;
    border: 4px solid #3da157;
}
.triad {
    position: absolute;
    left: 41px;
    bottom: 43px;
    overflow: visible;
    font-family: "Liberation Sans", sans-serif;
    font-size: 14px;
}
.cursor {
    position: absolute;
    left: 38%;
    bottom: 80px;
}
.messages {
    height: 151px;
    margin-top: 7px;
    background-color: #fffcff;
    border: 1px solid #9a919e;
    border-bottom-width: 2px;
}
.command {
    height: 29px;
    padding: 3px 1px;
    background-color: #fffcff;
    border: 1px solid #9a919e;
    border-top: none;
}
.command input {
    display: block;
    width: 290px;
    height: 22px;
    background-color: #338be0;
    border-right: 2px solid #1d2a4a;
    color: #e2f1ff;
}

/* status bar */
.status {
    display: flex;
    align-items: center;
    height: 39px;
    padding-bottom: 2px;
    background-color: #f5ebf8;
    border-top: 2px solid #aca2b0;
}
.coord {
    display: flex;
    align-items: center;
    width: 161px;
    height: 28px;
    padding-left: 6px;
    border-right: 1px solid #a9a0ad;
    font-size: 16px;
}
.coord:nth-child(3) {
    border-right: none;
}
.axis {
    width: 20px;
    font-family: "DejaVu Serif", serif;
    font-size: 14px;
}
.axis.y {
    color: #2c8a3c;
}
.axis.x {
    color: #d0283c;
}
.axis.z {
    color: #3a28b8;
}
.status button {
    height: 28px;
    padding: 0 2px;
    border: 1px solid #8a818e;
    border-width: 0 2px 2px 1px;
}

/* taskbar */
.taskbar {
    display: flex;
    align-items: stretch;
    gap: 5px;
    height: 57px;
    background-color: #7c9080;
    border-top: 1px solid #8f9992;
    color: #fff;
}
.taskbar button {
    display: grid;
    place-items: center;
    width: 82px;
}
.taskbar .start {
    width: 80px;
    padding-right: 3px;
}
.taskbar .open {
    background-color: #93a597;
    border: 1px solid #b5c2b8;
}
.taskbar .stacked {
    padding-right: 6px;
    border-right: 6px double #b5c2b8;
}
.taskbar .active {
    background-color: #aab6ac;
    border: 2px solid #e4e9e5;
}
.taskbar .camera {
    margin-left: 82px;
    background-color: #849a88;
    border-color: #92a696;
}
.tray {
    display: flex;
    align-items: center;
    gap: 11px;
    margin-left: auto;
}
.clock {
    display: flex;
    flex-direction: column;
    justify-content: center;
    align-items: center;
    margin: 0 32px 0 16px;
    font-family: "Open Sans", sans-serif;
    font-size: 16px;
    line-height: 24px;
}
```
